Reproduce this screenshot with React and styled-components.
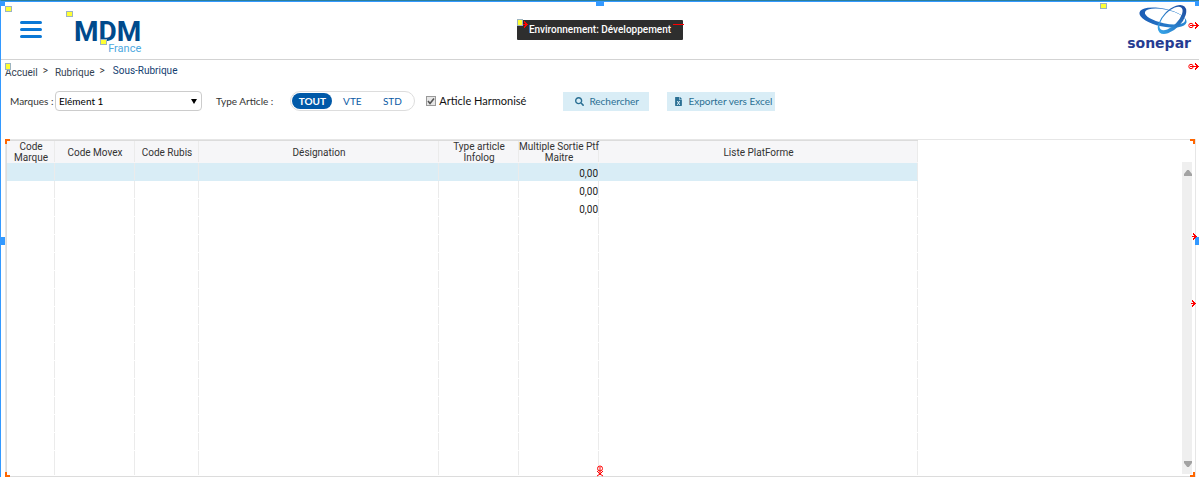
import React from "react";
import styled, { createGlobalStyle, css } from "styled-components";
import { FaSearch, FaFileExcel } from "react-icons/fa";

const GlobalStyle = createGlobalStyle`
  *, *::before, *::after { box-sizing: border-box; }
  body { margin: 0; background: #fff; }
  button, input, select { margin: 0; font: inherit; }
`;

const Page = styled.div`
  position: relative;
  display: flex;
  flex-direction: column;
  min-height: 100vh;
  border-top: 1px solid #2b7f9c;
  border-left: 1px solid #3399ff;
  box-shadow: inset 0 1px 0 #3399ff;
  color: #333;
  font: 10px/12px Roboto, "Liberation Sans", sans-serif;
`;

const Header = styled.header`
  display: grid;
  grid-template-columns: 1fr auto 1fr;
  align-items: start;
  height: 59px;
  padding: 0 8px;
  border-bottom: 1px solid #d3d3d3;
`;

const Brand = styled.div`
  display: flex;
  gap: 32px;
  padding: 17px 0 0 11px;
`;

const MenuButton = styled.button`
  display: flex;
  flex-direction: column;
  justify-content: space-between;
  width: 22px;
  height: 17px;
  margin-top: 3px;
  padding: 0;
  border: 0;
  background: none;
`;

const MenuBar = styled.span`
  height: 3px;
  border-radius: 2px;
  background: #0a78d6;
`;

const BrandName = styled.div`
  display: flex;
  flex-direction: column;
  align-items: flex-end;
  color: #004a8c;
  font-size: 28px;
  font-weight: 700;
  line-height: 28px;
`;

const BrandCountry = styled.span`
  color: #4da9df;
  font-size: 11px;
  font-weight: 400;
  line-height: 6px;
`;

const Environment = styled.div`
  margin-top: 19px;
  padding: 4px 12px;
  border-radius: 1px;
  background: #2e2e2e;
  color: #fff;
  font-weight: 500;
`;

const Company = styled.div`
  display: flex;
  flex-direction: column;
  align-items: flex-end;
  justify-self: end;
  padding-top: 3px;
  color: #263c92;
  font: 700 14px/14px "DejaVu Sans", sans-serif;
`;

const Orbits = styled.svg`
  width: 50px;
  height: 32px;
  margin-right: 3px;
`;

const Breadcrumb = styled.nav`
  display: flex;
  gap: 5px;
  padding: 5px 4px 0;
`;

const Crumb = styled.a`
  padding-top: 2px;
  color: #333f52;
  text-decoration: none;

  span + & { padding-left: 2px; }
`;

const CurrentCrumb = styled.span`
  padding-left: 3px;
  color: #123d70;
`;

const Filters = styled.form`
  display: flex;
  align-items: center;
  height: 20px;
  margin-top: 12px;
  padding-left: 9px;
  font-family: Lato, "Open Sans", sans-serif;
`;

const FieldLabel = styled.label`
  width: 45px;
`;

const SelectBox = styled.div`
  position: relative;
  width: 147px;
  height: 20px;
  color: #000;

  svg {
    position: absolute;
    top: 8px;
    right: 5px;
    width: 6px;
    height: 5px;
    pointer-events: none;
  }
`;

const Select = styled.select`
  appearance: none;
  width: 100%;
  height: 100%;
  padding: 0 3px;
  border: 1px solid #ccc;
  border-radius: 4px;
  background: #fff;
  color: #000;
`;

const TypeGroup = styled.fieldset`
  display: flex;
  align-items: center;
  gap: 17px;
  margin: 0 0 0 14px;
  padding: 0;
  border: 0;
`;

const Segments = styled.div`
  display: flex;
  width: 125px;
  height: 20px;
  padding: 1px;
  border: 1px solid #ddd;
  border-radius: 10px;
`;

const Segment = styled.label`
  display: grid;
  width: 40px;
  place-items: center;
  border-radius: 8px;
  color: #0a5aa5;

  input {
    position: absolute;
    opacity: 0;
    pointer-events: none;
  }

  &:has(input:checked) {
    background: #0059a8;
    color: #fff;
    font-weight: 700;
  }
`;

const CheckLabel = styled.label`
  display: flex;
  align-items: center;
  gap: 3px;
  margin-left: 11px;
  color: #111;
  font-size: 11px;
`;

const CheckBox = styled.span`
  display: grid;
  width: 10px;
  height: 10px;

  > * { grid-area: 1 / 1; }

  input {
    appearance: none;
    width: 10px;
    height: 10px;
    border: 1px solid #999;
    background: #e6e6e6;
  }

  svg { z-index: 1; pointer-events: none; }
`;

const Actions = styled.div`
  display: flex;
  gap: 18px;
  margin-left: 37px;
`;

const ActionButton = styled.button`
  display: flex;
  align-items: center;
  gap: 5px;
  width: ${({ $wide }) => ($wide ? 108 : 86)}px;
  height: 19px;
  padding: 0 0 0 ${({ $wide }) => ($wide ? 7 : 12)}px;
  border: 0;
  background: #d9edf6;
  color: #2a6f93;

  svg { width: 9px; height: 9px; }
`;

const Panel = styled.main`
  display: flex;
  flex: 1;
  justify-content: space-between;
  margin: 28px 3px 0 4px;
  padding-right: 3px;
  border: 1px solid #e6e6e6;
  border-bottom-color: #dcdcdc;
`;

const TableArea = styled.div`
  display: flex;
  width: 912px;
  border-top: 1px solid #dcdcdc;
  border-left: 1px solid #dcdcdc;
`;

const Table = styled.table`
  width: 100%;
  border-spacing: 0;
  table-layout: fixed;
`;

const columnLine = css`
  background-image: linear-gradient(#ebebeb, #ebebeb);
  background-position: right top;
  background-repeat: no-repeat;
  background-size: 1px calc(100% - 1px);
`;

const HeadCell = styled.th`
  height: 22px;
  padding: 0;
  background-color: #f6f6f8;
  font-weight: 400;
  line-height: 11px;
  white-space: pre;
  ${columnLine}
`;

const Row = styled.tr`
  height: ${({ $fill }) => ($fill ? "auto" : "18px")};
  background: ${({ $selected }) => ($selected ? "#d9edf6" : "transparent")};
`;

const Cell = styled.td`
  padding: 3px 1px 0 0;
  color: #222;
  text-align: right;
  ${columnLine}
`;

const ScrollBar = styled.div`
  display: flex;
  flex-direction: column;
  justify-content: space-between;
  width: 10px;
  margin: 22px 0 2px;
  padding: 8px 0 7px 2px;
  background: #efefef;
`;

const ScrollButton = styled.button`
  display: block;
  width: 8px;
  height: 6px;
  padding: 0;
  border: 0;
  background: #a3a3a3;
  clip-path: ${({ $down }) =>
    $down
      ? "polygon(0 0, 100% 0, 100% 35%, 60% 100%, 40% 100%, 0 35%)"
      : "polygon(40% 0, 60% 0, 100% 65%, 100% 100%, 0 100%, 0 65%)"};
`;

/* Design-surface marks: selection grips, field tags, corners and anchors. */
const Mark = styled.span`
  position: absolute;
  top: ${({ $top }) => $top};
  left: ${({ $left }) => $left};
  right: ${({ $right }) => $right};
  bottom: ${({ $bottom }) => $bottom};
  pointer-events: none;
`;

const Tag = styled(Mark)`
  width: ${({ $narrow }) => ($narrow ? 6 : 7)}px;
  height: ${({ $narrow }) => ($narrow ? 7 : 6)}px;
  border: 1px solid #9db4c0;
  background: #ffff33;
`;

const Grip = styled(Mark)`
  width: ${({ $flat }) => ($flat ? 8 : 4)}px;
  height: ${({ $flat }) => ($flat ? 4 : 8)}px;
  background: #3399ff;
`;

const CornerGrip = styled(Mark)`
  width: 4px;
  height: 5px;
  background: #3399ff;
`;

const Corner = styled(Mark)`
  width: 5px;
  height: 5px;
  border: 0 solid #ff6600;
  border-width: ${({ $edges }) => $edges};
`;

const Anchor = styled(Mark)`
  display: flex;
  svg { display: block; }
`;

const AnchorArrow = ({ ring, ...place }) => (
  <Anchor {...place}>
    <svg width={ring ? 11 : 5} height="7" fill="none" stroke="#f00" shapeRendering="crispEdges">
      {ring ? (
        <>
          <circle cx="3" cy="3.5" r="2.2" shapeRendering="auto" />
          <path d="M2 3.5h9M7 .5l3 3-3 3" />
        </>
      ) : (
        <path d="M0 3.5h5M1 .5l3 3-3 3" />
      )}
    </svg>
  </Anchor>
);

const columns = [
  { title: "Code\nMarque", width: 48 },
  { title: "Code Movex", width: 80 },
  { title: "Code Rubis", width: 64 },
  { title: "Désignation", width: 240 },
  { title: "Type article\nInfolog", width: 80 },
  { title: "Multiple Sortie Ptf\nMaitre", width: 80, value: true },
  { title: "Liste PlatForme" },
];

const rows = Array.from({ length: 17 }, (_, i) => ({ multiple: i < 3 ? "0,00" : "" }));

export default function App() {
  return (
    <Page>
      <GlobalStyle />
      <Header>
        <Brand>
          <MenuButton type="button" aria-label="Menu">
            <MenuBar />
            <MenuBar />
            <MenuBar />
          </MenuButton>
          <BrandName>
            MDM
            <BrandCountry>France</BrandCountry>
          </BrandName>
        </Brand>
        <Environment>Environnement: Développement</Environment>
        <Company>
          <Orbits viewBox="0 0 50 32" aria-hidden="true">
            <defs>
              <linearGradient id="wide" x1="0" y1="0" x2="1" y2="0">
                <stop offset="0" stopColor="#1c5cb4" />
                <stop offset="1" stopColor="#2a8ad6" />
              </linearGradient>
              <linearGradient id="tall" x1="0" y1="0" x2="1" y2="0">
                <stop offset="0" stopColor="#35a4e8" />
                <stop offset="1" stopColor="#1d4b9f" />
              </linearGradient>
              <mask id="wide-hole">
                <rect width="50" height="32" fill="#fff" />
                <ellipse cx="27" cy="12.5" rx="20.5" ry="6.8" transform="rotate(12 27 12.5)" fill="#000" />
              </mask>
              <mask id="tall-hole">
                <rect width="50" height="32" fill="#fff" />
                <ellipse cx="33" cy="14.5" rx="15" ry="7" transform="rotate(-46 33 14.5)" fill="#000" />
              </mask>
            </defs>
            <g mask="url(#wide-hole)">
              <ellipse cx="25" cy="13.5" rx="24" ry="9" transform="rotate(12 25 13.5)" fill="url(#wide)" />
            </g>
            <g mask="url(#tall-hole)">
              <ellipse cx="34" cy="15.5" rx="18" ry="9.5" transform="rotate(-46 34 15.5)" fill="url(#tall)" />
            </g>
          </Orbits>
          sonepar
        </Company>
      </Header>

      <Breadcrumb aria-label="Fil d'Ariane">
        <Crumb href="#accueil">Accueil</Crumb>
        <span>&gt;</span>
        <Crumb href="#rubrique">Rubrique</Crumb>
        <span>&gt;</span>
        <CurrentCrumb>Sous-Rubrique</CurrentCrumb>
      </Breadcrumb>

      <Filters onSubmit={(e) => e.preventDefault()}>
        <FieldLabel htmlFor="marques">Marques :</FieldLabel>
        <SelectBox>
          <Select id="marques">
            <option>Elément 1</option>
          </Select>
          <svg viewBox="0 0 6 5" aria-hidden="true">
            <path d="M0 0h6L3 5z" />
          </svg>
        </SelectBox>
        <TypeGroup aria-labelledby="type-article">
          <span id="type-article">Type Article :</span>
          <Segments>
            {["TOUT", "VTE", "STD"].map((type) => (
              <Segment key={type}>
                <input type="radio" name="type" defaultChecked={type === "TOUT"} />
                {type}
              </Segment>
            ))}
          </Segments>
        </TypeGroup>
        <CheckLabel>
          <CheckBox>
            <input type="checkbox" defaultChecked />
            <svg viewBox="0 0 10 10" fill="none" stroke="#555" strokeWidth="1.6" aria-hidden="true">
              <path d="M2 5l2 2.4L8 2.4" />
            </svg>
          </CheckBox>
          Article Harmonisé
        </CheckLabel>
        <Actions>
          <ActionButton type="submit">
            <FaSearch />
            Rechercher
          </ActionButton>
          <ActionButton type="button" $wide>
            <FaFileExcel />
            Exporter vers Excel
          </ActionButton>
        </Actions>
      </Filters>

      <Panel>
        <TableArea>
          <Table>
            <colgroup>
              {columns.map((c) => (
                <col key={c.title} width={c.width} />
              ))}
            </colgroup>
            <thead>
              <tr>
                {columns.map((c) => (
                  <HeadCell key={c.title} scope="col">{c.title}</HeadCell>
                ))}
              </tr>
            </thead>
            <tbody>
              {rows.map((row, i) => (
                <Row key={i} $selected={i === 0} $fill={i === rows.length - 1}>
                  {columns.map((c) => (
                    <Cell key={c.title}>{c.value ? row.multiple : ""}</Cell>
                  ))}
                </Row>
              ))}
            </tbody>
          </Table>
        </TableArea>
        <ScrollBar>
          <ScrollButton type="button" aria-label="Défiler vers le haut" />
          <ScrollButton type="button" aria-label="Défiler vers le bas" $down />
        </ScrollBar>
      </Panel>

      <Tag $top="5px" $left="4px" />
      <Tag $top="10px" $left="65px" />
      <Tag $top="38px" $left="99px" />
      <Tag $top="62px" $left="4px" $narrow />
      <Tag $top="18px" $left="calc(50% - 83px)" $narrow />
      <Tag $top="2px" $right="92px" />
      <Grip $top="1px" $left="calc(50% - 4px)" $flat />
      <Grip $top="236px" $left="0" />
      <Grip $top="236px" $right="0" />
      <CornerGrip $top="0" $left="0" />
      <CornerGrip $top="0" $right="0" />
      <Corner $top="138px" $left="4px" $edges="2px 0 0 2px" />
      <Corner $top="138px" $right="4px" $edges="2px 2px 0 0" />
      <Corner $bottom="0" $left="4px" $edges="0 0 2px 2px" />
      <Corner $bottom="0" $right="4px" $edges="0 2px 2px 0" />
      <AnchorArrow ring $top="21px" $right="0" />
      <AnchorArrow ring $top="62px" $right="0" />
      <AnchorArrow $top="232px" $right="2px" />
      <AnchorArrow $top="299px" $right="3px" />
      <AnchorArrow $top="20px" $left="calc(50% - 77px)" />
      <Anchor $top="20px" $right="calc(50% - 84px)">
        <svg width="11" height="7" fill="none" stroke="#f00" shapeRendering="crispEdges">
          <path d="M0 3.5h11" />
        </svg>
      </Anchor>
      <Anchor $bottom="0" $left="calc(50% - 4px)">
        <svg width="8" height="12" fill="none" stroke="#f00">
          <circle cx="4" cy="3.5" r="2.5" />
          <path d="M4 2v8M1 6l3 3 3-3M1 11l3-2 3 2" />
        </svg>
      </Anchor>
    </Page>
  );
}
